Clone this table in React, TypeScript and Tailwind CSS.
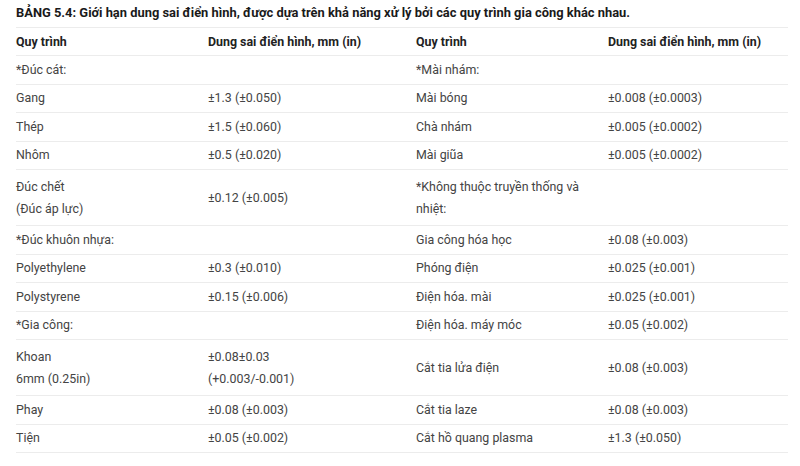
const rows: { cells: string[][]; tall?: boolean }[] = [
  { cells: [["*Đúc cát:"], [], ["*Mài nhám:"], []] },
  { cells: [["Gang"], ["±1.3 (±0.050)"], ["Mài bóng"], ["±0.008 (±0.0003)"]] },
  { cells: [["Thép"], ["±1.5 (±0.060)"], ["Chà nhám"], ["±0.005 (±0.0002)"]] },
  { cells: [["Nhôm"], ["±0.5 (±0.020)"], ["Mài giũa"], ["±0.005 (±0.0002)"]] },
  {
    tall: true,
    cells: [["Đúc chết", "(Đúc áp lực)"], ["±0.12 (±0.005)"], ["*Không thuộc truyền thống và", "nhiệt:"], []],
  },
  { cells: [["*Đúc khuôn nhựa:"], [], ["Gia công hóa học"], ["±0.08 (±0.003)"]] },
  { cells: [["Polyethylene"], ["±0.3 (±0.010)"], ["Phóng điện"], ["±0.025 (±0.001)"]] },
  { cells: [["Polystyrene"], ["±0.15 (±0.006)"], ["Điện hóa. mài"], ["±0.025 (±0.001)"]] },
  { cells: [["*Gia công:"], [], ["Điện hóa. máy móc"], ["±0.05 (±0.002)"]] },
  {
    tall: true,
    cells: [["Khoan", "6mm (0.25in)"], ["±0.08±0.03", "(+0.003/-0.001)"], ["Cắt tia lửa điện"], ["±0.08 (±0.003)"]],
  },
  { cells: [["Phay"], ["±0.08 (±0.003)"], ["Cắt tia laze"], ["±0.08 (±0.003)"]] },
  { cells: [["Tiện"], ["±0.05 (±0.002)"], ["Cắt hồ quang plasma"], ["±1.3 (±0.050)"]] },
];

const cols = "grid grid-cols-[192px_208px_192px_1fr]";

export default function App() {
  return (
    <div
      className="w-[800px] h-[466px] bg-white px-4 pt-[3px] text-[12.4px] leading-[22px]"
      style={{ fontFamily: "Roboto, 'Liberation Sans', sans-serif" }}
    >
      <div className="font-bold text-[#1a1a1a] text-[12.9px] leading-[18px] h-[24px] pt-[1px]">
        BẢNG 5.4: Giới hạn dung sai điển hình, được dựa trên khả năng xử lý bởi các quy trình gia công khác nhau.
      </div>
      <div className="w-[772px] border-t border-[#ececec]">
        <div className={`${cols} h-[28px] items-center border-b border-[#ececec] font-bold text-[#222]`}>
          <div>Quy trình</div>
          <div>Dung sai điển hình, mm (in)</div>
          <div>Quy trình</div>
          <div>Dung sai điển hình, mm (in)</div>
        </div>
        {rows.map((r, i) => (
          <div
            key={i}
            className={`${cols} items-center border-b border-[#ececec] text-[#444] ${
              r.tall ? "h-[56px]" : "h-[28.5px]"
            }`}
          >
            {r.cells.map((c, j) => (
              <div key={j} className="pr-4">
                {c.map((line, k) => (
                  <div key={k}>{line}</div>
                ))}
              </div>
            ))}
          </div>
        ))}
      </div>
    </div>
  );
}
